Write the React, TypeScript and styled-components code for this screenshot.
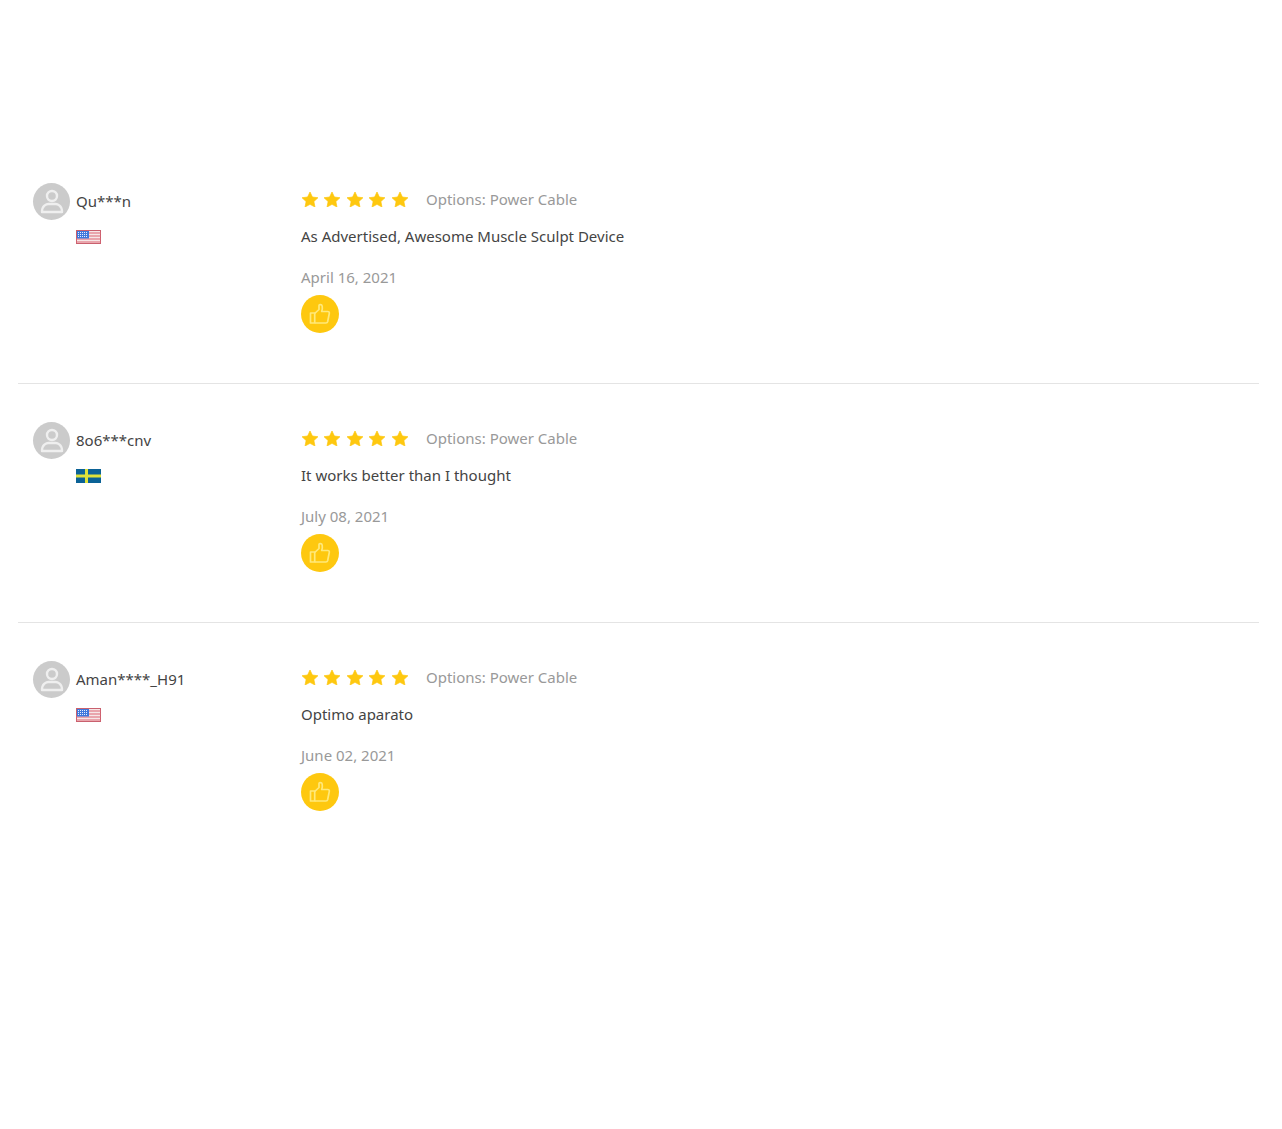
import React from 'react';
import styled, { createGlobalStyle } from 'styled-components';

const GlobalStyle = createGlobalStyle`
  html, body {
    margin: 0;
    background: #fff;
    font-family: 'Noto Sans', 'Open Sans', sans-serif;
  }
`;

const Page = styled.div`
  width: 1282px;
  height: 1129px;
  padding: 145px 23px 0 18px;
  box-sizing: border-box;
`;

const Row = styled.div`
  display: flex;
  height: 239px;
  box-sizing: border-box;
  padding-top: 37px;
  border-bottom: ${(props) => (props.last ? 'none' : '1px solid #e4e4e4')};
`;

const UserColumn = styled.div`
  width: 283px;
  padding-left: 15px;
  box-sizing: border-box;
  flex-shrink: 0;
`;

const UserLine = styled.div`
  display: flex;
  align-items: center;
  gap: 6px;
  height: 38px;
`;

const Avatar = styled.div`
  width: 37px;
  height: 37px;
  border-radius: 50%;
  background: #cbcbcb;
  display: flex;
  align-items: center;
  justify-content: center;
`;

const UserName = styled.span`
  font-size: 15px;
  color: #444;
`;

const FlagWrap = styled.div`
  margin: 10px 0 0 43px;
  width: 25px;
  height: 14px;
  line-height: 0;
`;

const ReviewColumn = styled.div`
  display: flex;
  flex-direction: column;
  align-items: flex-start;
`;

const RatingLine = styled.div`
  display: flex;
  align-items: center;
  height: 34px;
`;

const Stars = styled.div`
  display: flex;
  gap: 6.5px;
  margin: 0 18.5px 0 0.5px;
`;

const OptionsText = styled.span`
  font-size: 15px;
  color: #999;
`;

const Comment = styled.p`
  margin: 10px 0 0;
  font-size: 15px;
  line-height: 20px;
  color: #444;
`;

const DateText = styled.div`
  margin-top: 21px;
  font-size: 15px;
  line-height: 20px;
  color: #999;
`;

const LikeButton = styled.button`
  margin-top: 8px;
  width: 38px;
  height: 38px;
  padding: 0;
  border: none;
  border-radius: 50%;
  background: #fec80f;
  display: flex;
  align-items: center;
  justify-content: center;
`;

const PersonIcon = () => (
  <svg width="26" height="26" viewBox="0 0 26 26" fill="none" stroke="#efefef" strokeWidth="2.4" strokeLinejoin="round">
    <circle cx="13" cy="8" r="5" />
    <path d="M3 24c0-3 .6-5 2.4-6.4 1.3-1 2.8-1.6 4-1.6h7.2c1.2 0 2.7.6 4 1.6C22.4 19 23 21 23 24z" />
  </svg>
);

const StarIcon = () => (
  <svg width="16" height="15" viewBox="0 0 18 17">
    <path d="M9 0l2.7 5.7 6.3.8-4.6 4.3 1.2 6.2L9 14l-5.6 3 1.2-6.2L0 6.5l6.3-.8z" fill="#fec80f" stroke="#fec80f" strokeWidth="0.8" strokeLinejoin="round" />
  </svg>
);

const ThumbIcon = () => (
  <svg width="22" height="22" viewBox="0 0 22 22" fill="none" stroke="#ffe97a" strokeWidth="1.7" strokeLinejoin="round">
    <path d="M1.5 10h4.2v10H1.5z" />
    <path d="M5.7 10.5L10 6.5V2.6c0-1.4 2.8-1.5 3.2.5.3 1.6 0 3.8-.5 5.4h6.2c1 0 1.6.9 1.4 1.8l-1.6 8.2c-.2.9-.9 1.5-1.8 1.5H5.7" />
  </svg>
);

const FlagUS = () => (
  <svg width="25" height="14" viewBox="0 0 25 14">
    <rect x="0.5" y="0.5" width="24" height="13" fill="#f6e6e6" stroke="#c9606e" />
    <path d="M12 3h13M12 6h13M0 9h25M0 12h25" stroke="#dc6473" strokeWidth="1.2" />
    <rect x="1" y="1" width="12" height="7.5" fill="#3f78dc" />
    <path d="M2 2.5h10M2 4.5h10M2 6.5h10" stroke="#e6eefc" strokeWidth="1" strokeDasharray="1 1" />
  </svg>
);

const FlagSE = () => (
  <svg width="25" height="14" viewBox="0 0 25 14">
    <rect width="25" height="14" fill="#0b6296" />
    <path d="M0 7h25M10.5 0v14" stroke="#dfe23a" strokeWidth="3" />
  </svg>
);

const reviews = [
  { name: 'Qu***n', flag: <FlagUS />, comment: 'As Advertised, Awesome Muscle Sculpt Device', date: 'April 16, 2021' },
  { name: '8o6***cnv', flag: <FlagSE />, comment: 'It works better than I thought', date: 'July 08, 2021' },
  { name: 'Aman****_H91', flag: <FlagUS />, comment: 'Optimo aparato', date: 'June 02, 2021' },
];

export default function App() {
  return (
    <Page>
      <GlobalStyle />
      {reviews.map((review, i) => (
        <Row key={review.name} last={i === reviews.length - 1}>
          <UserColumn>
            <UserLine>
              <Avatar>
                <PersonIcon />
              </Avatar>
              <UserName>{review.name}</UserName>
            </UserLine>
            <FlagWrap>{review.flag}</FlagWrap>
          </UserColumn>
          <ReviewColumn>
            <RatingLine>
              <Stars>
                {[0, 1, 2, 3, 4].map((n) => (
                  <StarIcon key={n} />
                ))}
              </Stars>
              <OptionsText>Options: Power Cable</OptionsText>
            </RatingLine>
            <Comment>{review.comment}</Comment>
            <DateText>{review.date}</DateText>
            <LikeButton>
              <ThumbIcon />
            </LikeButton>
          </ReviewColumn>
        </Row>
      ))}
    </Page>
  );
}
